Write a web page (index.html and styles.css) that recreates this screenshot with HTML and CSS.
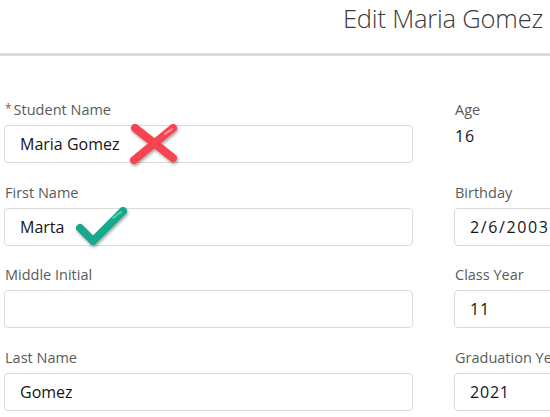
FILE: index.html
```html
<!DOCTYPE html>
<html>
<head>
<meta charset="utf-8">
<link rel="stylesheet" href="styles.css">
</head>
<body>
<div class="page">
  <header class="header">
    <h1 class="title">Edit Maria Gomez</h1>
  </header>
  <main class="form">
    <div class="field">
      <label class="label"><span class="req">*</span>Student Name</label>
      <div class="input">Maria Gomez</div>
    </div>
    <div class="field">
      <label class="label">Age</label>
      <div class="value num">16</div>
    </div>
    <div class="field">
      <label class="label">First Name</label>
      <div class="input">Marta</div>
    </div>
    <div class="field">
      <label class="label">Birthday</label>
      <div class="input date">2/6/2003</div>
    </div>
    <div class="field">
      <label class="label">Middle Initial</label>
      <div class="input"></div>
    </div>
    <div class="field">
      <label class="label">Class Year</label>
      <div class="input num">11</div>
    </div>
    <div class="field">
      <label class="label">Last Name</label>
      <div class="input">Gomez</div>
    </div>
    <div class="field">
      <label class="label">Graduation Year</label>
      <div class="input num">2021</div>
    </div>
  </main>
  <svg class="marks" width="550" height="417" viewBox="0 0 550 417">
    <g class="mark-x">
      <line x1="135" y1="128" x2="173" y2="158" stroke="#f7444e" stroke-width="8" stroke-linecap="round"/>
      <line x1="173" y1="128" x2="134" y2="160" stroke="#f7444e" stroke-width="8" stroke-linecap="round"/>
      <line x1="165" y1="134" x2="172" y2="129" stroke="#ff9aa0" stroke-width="2" stroke-linecap="round"/>
    </g>
    <g class="mark-check">
      <polyline points="80,228 93,241 123,211" fill="none" stroke="#17a98b" stroke-width="8" stroke-linecap="round" stroke-linejoin="round"/>
      <line x1="113" y1="218" x2="121" y2="212" stroke="#5fc9b1" stroke-width="2" stroke-linecap="round"/>
    </g>
  </svg>
</div>
</body>
</html>
```
FILE: styles.css
```css
html, body {
  margin: 0;
  padding: 0;
  background: #ffffff;
}
body {
  width: 550px;
  height: 417px;
  overflow: hidden;
  font-family: "Open Sans", "Noto Sans", sans-serif;
}
.page {
  position: relative;
  width: 550px;
  height: 417px;
  overflow: hidden;
}
.header {
  height: 53px;
  box-sizing: content-box;
  border-bottom: 3px solid #dcdcdc;
  display: flex;
  justify-content: flex-end;
  align-items: flex-start;
  padding-right: 7px;
}
.title {
  margin: 0;
  padding-top: 2px;
  font-size: 25.5px;
  line-height: 32px;
  font-weight: 300;
  color: #3a3a3a;
  letter-spacing: -0.2px;
}
.form {
  display: grid;
  grid-template-columns: 409px 200px;
  column-gap: 41px;
  row-gap: 19.67px;
  padding: 44px 0 0 4px;
}
.field {
  display: flex;
  flex-direction: column;
}
.label {
  display: block;
  height: 20px;
  padding-left: 1px;
  font-size: 14.5px;
  line-height: 20px;
  color: #5a5a5a;
  margin-bottom: 5px;
  white-space: nowrap;
}
.req {
  color: #c23934;
  font-size: 12px;
  line-height: 0;
  margin-right: 2px;
  position: relative;
  top: -2px;
}
.input {
  box-sizing: border-box;
  height: 38px;
  border: 1px solid #dddbda;
  border-radius: 4px;
  padding: 0 15px;
  display: flex;
  align-items: center;
  font-size: 16px;
  color: #161616;
  white-space: nowrap;
}
.value {
  height: 38px;
  padding: 1px 0 0 1px;
  box-sizing: border-box;
  font-size: 16px;
  line-height: 20px;
  color: #161616;
}
.num {
  letter-spacing: 0.8px;
}
.date {
  letter-spacing: 1.6px;
}
.marks {
  position: absolute;
  left: 0;
  top: 0;
  pointer-events: none;
}
.mark-x, .mark-check {
  filter: drop-shadow(1px 2px 1.5px rgba(0, 0, 0, 0.35));
}
```
